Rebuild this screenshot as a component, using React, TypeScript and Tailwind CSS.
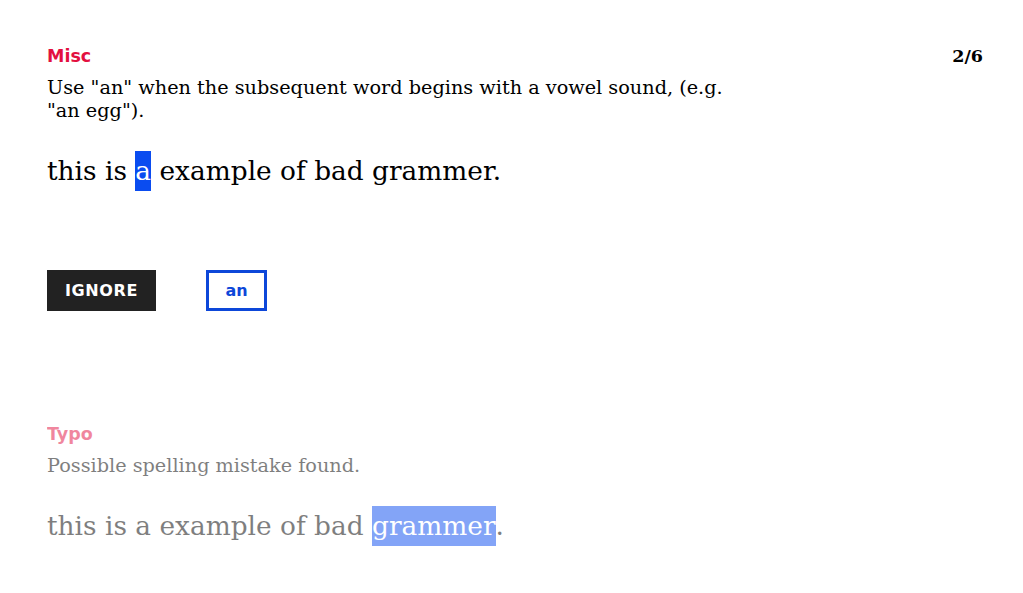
import React from 'react';

const serif = { fontFamily: '"DejaVu Serif", serif' };
const sans = { fontFamily: '"DejaVu Sans", sans-serif' };

function Card({
  label,
  message,
  before,
  mark,
  after,
  counter,
  actions,
  faded,
}: {
  label: string;
  message: string;
  before: string;
  mark: string;
  after: string;
  counter?: string;
  actions?: boolean;
  faded?: boolean;
}) {
  return (
    <div className={faded ? 'opacity-50' : ''}>
      <div className="flex items-start justify-between h-[24px]">
        <span className="text-[17.5px] leading-[24px] font-bold text-[#e3103f]" style={sans}>
          {label}
        </span>
        {counter && (
          <span className="text-[17.5px] leading-[24px] font-bold text-black" style={serif}>
            {counter}
          </span>
        )}
      </div>
      <p className="mt-[8px] max-w-[700px] text-[19.25px] leading-[23px] text-black" style={serif}>
        {message}
      </p>
      <p className="mt-[29px] text-[26.4px] leading-[40px] text-black" style={serif}>
        {before}
        <span className="inline-block h-[40px] bg-[#0a4cf0] text-white">{mark}</span>
        {after}
      </p>
      {actions && (
        <div className="mt-[79px] flex items-center gap-[50px]" style={sans}>
          <button className="h-[41px] w-[109px] bg-[#222222] text-white text-[16px] font-bold tracking-[0.04em]">
            IGNORE
          </button>
          <button className="h-[41px] w-[61px] border-[3px] border-[#0d47d9] text-[#0d47d9] text-[16px] font-bold">
            an
          </button>
        </div>
      )}
    </div>
  );
}

export default function App() {
  return (
    <div className="w-[1023px] h-[593px] bg-white pl-[47px] pr-[40px] pt-[44px] overflow-hidden">
      <Card
        label="Misc"
        counter="2/6"
        message={'Use "an" when the subsequent word begins with a vowel sound, (e.g. "an egg").'}
        before="this is "
        mark="a"
        after=" example of bad grammer."
        actions
      />
      <div className="mt-[111px]">
        <Card
          label="Typo"
          message="Possible spelling mistake found."
          before="this is a example of bad "
          mark="grammer"
          after="."
          faded
        />
      </div>
    </div>
  );
}
